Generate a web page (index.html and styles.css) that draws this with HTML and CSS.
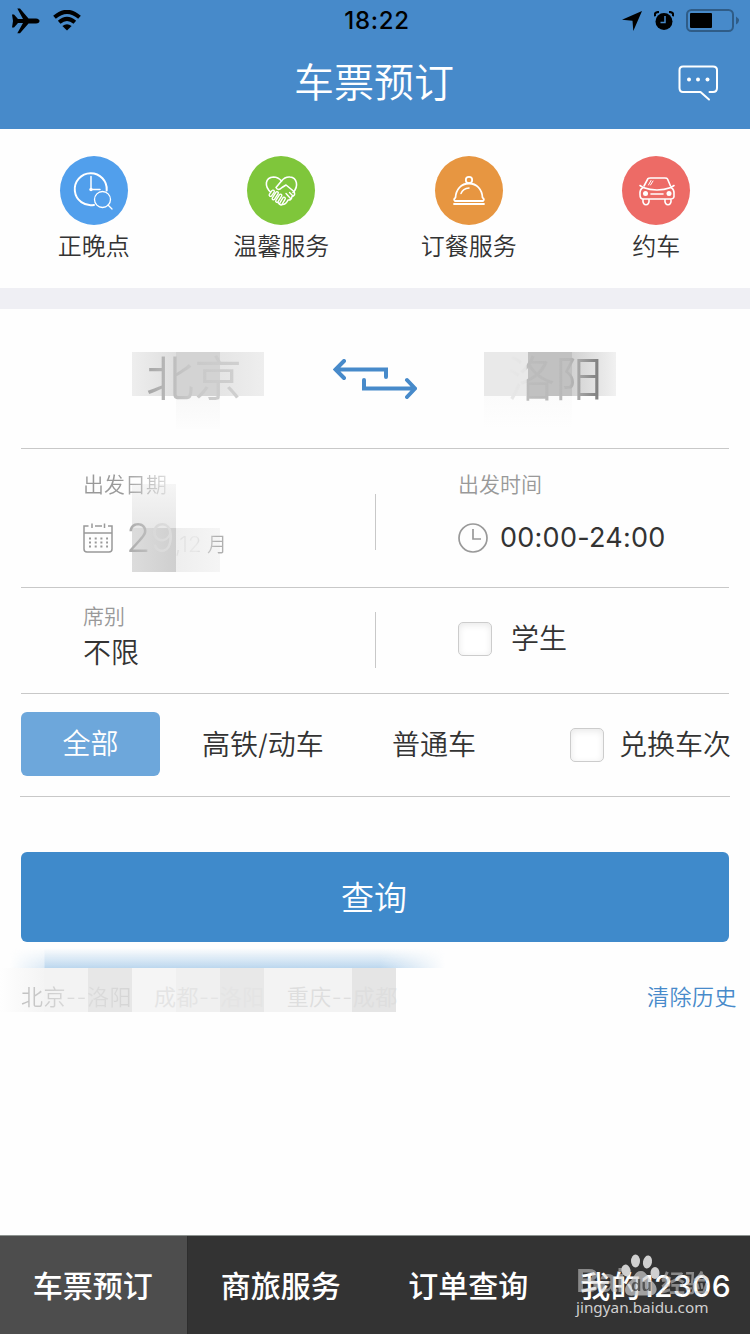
FILE: index.html
```html
<!DOCTYPE html>
<html lang="zh-CN">
<head>
<meta charset="utf-8">
<title>车票预订</title>
<link rel="stylesheet" href="styles.css">
</head>
<body>
<div class="app">
  <header class="header">
    <div class="status">
      <div class="status-left">
        <svg width="28" height="26" viewBox="0 0 28 26"><path d="M0 6.500 L2 6.500 L6 11 L11 11 L5.300 0.500 L8 0.500 L16.500 10.500 L24 10.500 Q27.500 11 27.500 13 Q27.500 15 24 15.500 L16.500 15.500 L8 25.300 L5.300 25.300 L11 15 L6 15 L2 19.500 L0 19.500 L1 13 Z"/></svg>
        <svg class="wifi" width="28" height="21" viewBox="0 0 28 21"><path d="M1.500 7.300 Q14 -3.700 26.500 7.300 M6.200 12.300 Q14 5.300 21.800 12.300" fill="none" stroke="#000" stroke-width="4"/><path d="M14 20.500 L9.400 16 Q14 12.500 18.600 16 Z"/></svg>
      </div>
      <div class="time">18:22</div>
      <div class="status-right">
        <svg width="20" height="20" viewBox="0 0 20 20"><path d="M20 0 L11.300 20 L10.500 9.700 L0 8.800 Z"/></svg>
        <svg width="20" height="20" viewBox="0 0 20 20"><circle cx="10" cy="10.500" r="8.500"/><path d="M1 5.300 Q0 1 5 1 M19 5.300 Q20 1 15 1" fill="none" stroke="#000" stroke-width="2.200"/><path d="M11 5 V11.500 H6.500" fill="none" stroke="#478aca" stroke-width="1.500"/></svg>
        <svg width="53" height="23" viewBox="0 0 53 23"><rect x="1" y="1" width="46" height="21" rx="4.500" fill="none" stroke="#2f5c87" stroke-width="2"/><rect x="4" y="4" width="22" height="15" rx="1"/><path d="M50 7.500 Q56 11.500 50 15.500 Z" fill="#2f5c87"/></svg>
      </div>
    </div>
    <div class="title-row">
      <h1 class="title">车票预订</h1>
      <svg class="chat" width="40" height="36" viewBox="0 0 40 36" fill="none" stroke="#fff" stroke-width="2" stroke-linecap="round" stroke-linejoin="round"><path d="M31.500 27 H35 Q39 27 39 23 V5 Q39 1.500 35 1.500 H5 Q1.500 1.500 1.500 5 V23 Q1.500 27 5 27 H22.500 L31 34.500"/><g fill="#fff" stroke="none"><circle cx="11" cy="14.500" r="2"/><circle cx="20" cy="14.500" r="2"/><circle cx="29.500" cy="14.500" r="2"/></g></svg>
    </div>
  </header>

  <nav class="services">
    <a class="service">
      <svg class="badge blue" viewBox="0 0 68 68"><path d="M46.700 34 A16 16 0 1 0 34 48.400" stroke-width="2"/><path d="M31 20 V33 H40" stroke-width="1.500"/><circle cx="31" cy="33" r="1.700" fill="#fff" stroke="none"/><circle cx="42.500" cy="43" r="8" stroke-width="1.300"/><path d="M48 48.500 L52 52.500" stroke-width="1.300"/></svg>
      <span>正晚点</span>
    </a>
    <a class="service">
      <svg class="badge green" viewBox="0 0 68 68"><path d="M24 36 C17 30 18 21 26.500 20.500 Q31 20.500 34.500 24.500 Q38 20 43 20.500 C50 21 52 30 46 36" stroke-width="1.600"/><path d="M34.500 24.500 L29 31 Q31 35 35 31 L39 28.500 L47 35 Q49 39 45 40 Q44.500 44 41 43.500 Q39 48 35.500 48 Q33 49 31 46" stroke-width="1.600"/><path d="M26 35 L23.500 38.500 M30 36.500 L26.500 42 M33.500 39 L30 44.500 M37 42 L34 47" stroke-width="4"/><path d="M26 35 L23.500 38.500 M30 36.500 L26.500 42 M33.500 39 L30 44.500 M37 42 L34 47" stroke="#7fc63b" stroke-width="1.300"/><path d="M39 37 L43.500 42 M42.500 36 L46 39.500" stroke-width="1.400"/></svg>
      <span>温馨服务</span>
    </a>
    <a class="service">
      <svg class="badge orange" viewBox="0 0 68 68"><circle cx="34" cy="23.500" r="3.200"/><path d="M34 27 C26 27 21 33 20.500 41 Q18 43 20 44.500 H48 Q50 43 47.500 41 C47 33 42 27 34 27 Z M19 47.500 H49"/><path d="M26 37 Q28 32 34 31.500" stroke-width="1.500"/></svg>
      <span>订餐服务</span>
    </a>
    <a class="service">
      <svg class="badge red" viewBox="0 0 68 68"><path d="M22 29.500 L26 22 Q26.500 21.500 28.500 21.500 H43 Q45 21.500 45.500 22.500 L48.500 29.500 M18 29 L21 31 Q35 36 49 31 L52 29 M21 31 Q17.500 33 18 38 Q18 42.500 21 42.500 H49 Q52.500 42.500 52 38 Q52.500 33 49 31 M21 43 C20 50 28 50 27 43 M43 43 C42 50 50 50 49 43 M29 37.500 H41" stroke-width="1.600"/><path d="M26.500 28.500 L29 24 M28.500 28.500 L31 24.500" stroke-width="1"/><g fill="#fff" stroke="none"><circle cx="23.500" cy="37" r="2.500"/><circle cx="47" cy="37" r="2.500"/></g></svg>
      <span>约车</span>
    </a>
  </nav>

  <main class="form">
    <section class="row stations">
      <div class="station from"><i class="mosaic m-a"></i><b>北京</b></div>
      <svg class="swap" width="84" height="40" viewBox="0 0 84 40" fill="none" stroke="#478aca" stroke-width="4" stroke-linecap="round" stroke-linejoin="miter"><path d="M53 18 V10.500 H4 M11 2 L2.500 10.500 L11 19 M31 21 V29.500 H80 M74 21 L82 29.500 L74 38"/></svg>
      <div class="station to"><i class="mosaic m-b"></i><b>洛阳</b></div>
    </section>

    <section class="row pair dates">
      <div class="cell date">
        <i class="mosaic m-c"></i>
        <div class="caption fade-caption">出发日期</div>
        <div class="value">
          <svg width="30" height="30" viewBox="0 0 30 30" fill="none" stroke="#999" stroke-width="1.500"><path d="M5.500 3 H1 V26 Q1 29 4 29 H26 Q29 29 29 26 V3 H25 M12 3 H19 M1 10 H29 M9 .5 V5 M21.500 .5 V5"/><path d="M6 15.500 H25 M6 19.500 H25 M6 23.500 H25" stroke-width="2" stroke-dasharray="2 3.700"/></svg>
          <span class="date-text"><em>29</em><small>,12</small><u>月</u></span>
        </div>
      </div>
      <div class="cell">
        <div class="caption">出发时间</div>
        <div class="value">
          <svg width="30" height="30" viewBox="0 0 30 30" fill="none" stroke="#999" stroke-width="1.700"><circle cx="15" cy="15" r="14"/><path d="M15 6 V16 H23"/></svg>
          <span class="range">00:00-24:00</span>
        </div>
      </div>
    </section>

    <section class="row pair seats">
      <div class="cell">
        <div class="caption">席别</div>
        <div class="seat">不限</div>
      </div>
      <label class="cell check"><i class="box"></i><span>学生</span></label>
    </section>

    <section class="row types">
      <button class="type active">全部</button>
      <span class="type-fast">高铁/动车</span>
      <span class="type-slow">普通车</span>
      <label class="check exchange"><i class="box"></i><span>兑换车次</span></label>
    </section>

    <button class="search">查询</button>

    <section class="history">
      <i class="mosaic glow"></i>
      <div class="records"><span>北京--洛阳</span><span>成都--洛阳</span><span>重庆--成都</span></div>
      <a class="clear">清除历史</a>
    </section>
  </main>

  <footer class="tabs">
    <a class="tab current">车票预订</a>
    <a class="tab">商旅服务</a>
    <a class="tab">订单查询</a>
    <a class="tab mine">我的12306</a>
    <div class="watermark">
      <div class="brand"><strong>Bai</strong><svg width="40" height="42" viewBox="0 0 40 42"><g fill="#d0d0d0"><ellipse cx="14.500" cy="7" rx="4.500" ry="6.500"/><ellipse cx="26.500" cy="8" rx="4.500" ry="6.500" transform="rotate(10 26.500 8)"/><ellipse cx="5" cy="16.500" rx="4.500" ry="6" transform="rotate(-12 5 16.500)"/><ellipse cx="34" cy="19" rx="4.500" ry="6"/><path opacity=".7" d="M20 17 C26 17 26 24 32 28 C39 35 35 42 28 41.500 H12 C4 43 1 35 8 28 C14 24 13 17 20 17 Z"/></g><text x="10" y="37" class="du">du</text></svg><strong class="jy">经验</strong></div>
      <div class="site">jingyan.baidu.com</div>
    </div>
  </footer>
</div>
</body>
</html>
```
FILE: styles.css
```css
* { box-sizing: border-box; }
body {
  margin: 0;
  font-family: Inter, "Noto Sans CJK SC", sans-serif;
  font-weight: 350;
  color: #333;
  background: #fefefe;
}
svg { display: block; flex: none; }
button { font: inherit; border: 0; padding: 0; }
.app { width: 750px; height: 1334px; display: flex; flex-direction: column; overflow: hidden; }

.header { height: 129px; background: #478aca; }
.status {
  height: 40px;
  padding: 0 11px 0 12px;
  display: grid;
  grid-template-columns: 1fr auto 1fr;
  align-items: center;
}
.status-left, .status-right { display: flex; align-items: center; }
.status-left { gap: 13px; }
.status-right { gap: 12px; justify-content: flex-end; }
.time { font-size: 24px; font-weight: 500; line-height: 40px; color: #000; padding: 1px 0 0 3px; letter-spacing: .7px; }
.title-row { height: 86px; display: grid; grid-template-columns: 1fr auto 1fr; align-items: center; padding: 0 32px; }
.title { grid-column: 2; margin: 0 1px 0 -1px; font-size: 40px; line-height: 80px; font-weight: 350; color: #fff; }
.chat { justify-self: end; }

.services { height: 159px; display: grid; grid-template-columns: repeat(4, 1fr); padding-top: 27px; }
.service { display: flex; flex-direction: column; align-items: center; font-size: 24px; line-height: 44px; }
.badge { width: 68px; height: 69px; border-radius: 50%; fill: none; stroke: #fff; stroke-width: 1.8; stroke-linejoin: round; stroke-linecap: round; }
.blue { background: #519fec; }
.green { background: #7fc63b; }
.orange { background: #e79641; }
.red { background: #ed6b66; }

.form { flex: 1; border-top: 21px solid #efeff4; }
.row { margin: 0 21px; border-bottom: 1px solid #c8c8c8; }
.stations { height: 140px; display: flex; align-items: center; justify-content: space-between; padding: 0 113px 0 111px; }
.station { position: relative; width: 132px; font-size: 48px; line-height: 142px; text-align: center; }
.station b { position: relative; font-weight: 350; color: transparent; background-clip: text; }
.from b { background-image: linear-gradient(90deg, #a5a5a5, #bfbfbf 30%, #c8c8c8 45%, #d0d0d0); margin-right: 8px; }
.to b { background-image: linear-gradient(90deg, #e8e8e8, #e4e4e4 20%, #bcbcbc 21%, #b8b8b8 65%, #777); margin-left: 10px; }
.mosaic { position: absolute; display: block; }
.m-a {
  left: 0; top: 44px; width: 132px; height: 77px;
  background:
    linear-gradient(90deg, #eee, #dedede) 0 0 / 44px 44px no-repeat,
    linear-gradient(#d3d3d3, #d3d3d3) 44px 0 / 44px 44px no-repeat,
    linear-gradient(90deg, #e5e5e5, #eee) 88px 0 / 44px 44px no-repeat,
    linear-gradient(#f8f8f8, #fdfdfd) 44px 44px / 44px 33px no-repeat;
}
.m-b {
  left: 0; top: 44px; width: 132px; height: 77px;
  background:
    linear-gradient(#e9e9e9, #e9e9e9) 0 0 / 44px 44px no-repeat,
    linear-gradient(#c1c1c1, #c1c1c1) 44px 0 / 44px 44px no-repeat,
    linear-gradient(90deg, #d2d2d2, #f1f1f1) 88px 0 / 44px 44px no-repeat,
    linear-gradient(#fbfbfb, #fefefe) 0 44px / 88px 33px no-repeat;
}
.swap { margin: 0 -1px 0 1px; }

.pair { display: grid; grid-template-columns: 1fr 1fr; align-items: center; position: relative; }
.pair::after { content: ""; width: 1px; height: 56px; background: #c8c8c8; position: absolute; left: 354px; top: 50%; margin-top: -29px; }
.cell { position: relative; padding-left: 62px; }
.cell + .cell { padding-left: 83px; }
.caption { font-size: 21px; line-height: 30px; font-weight: 350; color: #999; }
.dates { height: 139px; }
.dates::after { margin-top: -24px; }
.dates .cell { height: 139px; padding-top: 21px; }
.value { display: flex; align-items: center; height: 40px; margin-top: 18px; }
.range { font-size: 27px; font-weight: 400; line-height: 34px; margin: -1px 0 0 12px; letter-spacing: .25px; }
.fade-caption { position: relative; width: 84px; color: transparent; background: linear-gradient(90deg, #999 45%, #ddd) text; }
.m-c {
  left: 111px; top: 35px; width: 96px; height: 88px;
  background:
    linear-gradient(#f5f5f5, #e8e8e8) 0 0 / 44px 44px no-repeat,
    linear-gradient(90deg, #dcdcdc, #cfcfcf) 0 44px / 44px 44px no-repeat,
    linear-gradient(90deg, #eee, #f5f5f5) 44px 44px / 44px 44px no-repeat;
}
.date .value { position: relative; }
.date-text { display: flex; align-items: baseline; margin-left: 13px; font-weight: 350; width: 102px; color: transparent; background: linear-gradient(90deg, #aaa 0, #bbb 20px, #d8d8d8 24px, #dcdcdc 46px, #e8e8e8 70px, #b0b0b0 90px) text; }
.date-text em { font-style: normal; font-size: 40px; line-height: 40px; width: 49px; }
.date-text small { font-size: 22px; line-height: 24px; width: 32px; }
.date-text u { text-decoration: none; font-size: 20px; line-height: 24px; }

.seats { height: 106px; }
.seats .cell { padding-bottom: 5px; }
.seat { font-size: 28px; line-height: 42px; }
.check { display: flex; align-items: center; font-size: 28px; line-height: 42px; }
.box { width: 34px; height: 34px; border: 1px solid #ccc; border-radius: 5px; background: #fff; box-shadow: inset 0 2px 7px #e8e8e8; }
.seats .check { gap: 19px; padding: 0 0 3px 83px; }

.types { height: 103px; display: flex; align-items: center; font-size: 28px; line-height: 42px; margin: 0 20px; padding-left: 1px; white-space: nowrap; }
.type { width: 139px; height: 64px; border-radius: 6px; color: #fff; background: #6da7db; margin: -2px 42px 0 0; }
.type-fast { width: 190px; }
.exchange { margin: 0 -1px 0 auto; gap: 15px; }

.search { display: block; width: 708px; height: 90px; margin: 55px 21px 0; padding: 0 2px 2px 0; border-radius: 6px; background: #3f8acb; color: #fff; font-size: 33px; }
.history { position: relative; margin-top: 26px; height: 44px; display: flex; align-items: center; justify-content: space-between; padding: 14px 13px 0 0; font-size: 22px; line-height: 30px; }
.glow {
  left: 10px; top: -20px; width: 435px; height: 20px;
  background: linear-gradient(rgba(254,254,254,0), #bcd7ee);
  mask-image: linear-gradient(90deg, transparent, rgba(0,0,0,.5) 34px, #000 35px, #000 370px, transparent);
}
.records {
  width: 436px; height: 44px; margin-top: -14px; padding: 14px 0 0 21px;
  display: flex; gap: 22px; color: #e4e4e4; white-space: nowrap; overflow: hidden; letter-spacing: .5px;
  background:
    linear-gradient(90deg, #fefefe, #f4f4f4) 0 0 / 44px 44px no-repeat,
    linear-gradient(90deg, #f3f3f3 50%, #e7e7e7 50%) 44px 0 / 88px 44px no-repeat,
    linear-gradient(90deg, #f5f5f5 50%, #f0f0f0 50%) 132px 0 / 88px 44px no-repeat,
    linear-gradient(90deg, #e8e8e8 50%, #f3f3f3 50%) 220px 0 / 88px 44px no-repeat,
    linear-gradient(90deg, #f3f3f3 50%, #e5e5e5 50%) 308px 0 / 88px 44px no-repeat;
}
.records span:first-child { color: transparent; background: linear-gradient(90deg, #c0c0c0, #ddd 50%, #d5d5d5) text; }
.records span:last-child { color: #dedede; }
.clear { color: #478aca; letter-spacing: .5px; }

.tabs { position: relative; height: 99px; display: grid; grid-template-columns: repeat(4, 187.5px); background: #333; border-top: 1px solid #8d9390; }
.tab { display: flex; align-items: center; justify-content: center; padding: 0 1px 3px 0; font-size: 30px; font-weight: 500; color: #fff; white-space: nowrap; }
.current { background: #4d4d4d; border-right: 1px solid #2d2d2d; }
.mine { letter-spacing: .4px; }
.watermark { position: absolute; left: 576px; top: 18px; color: #d0d0d0; }
.brand { display: flex; align-items: flex-end; height: 42px; }
.brand strong { font: 700 33px/30px "Liberation Sans", sans-serif; width: 45px; letter-spacing: -1px; opacity: .55; }
.brand .jy { font: 700 24px/28px "Noto Sans CJK SC", sans-serif; width: 52px; letter-spacing: 0; }
.du { font: 700 17px "Liberation Sans", sans-serif; fill: #333; opacity: .7; }
.site { font: 400 15.3px/20px "Noto Sans", sans-serif; margin-top: 1px; }
```
